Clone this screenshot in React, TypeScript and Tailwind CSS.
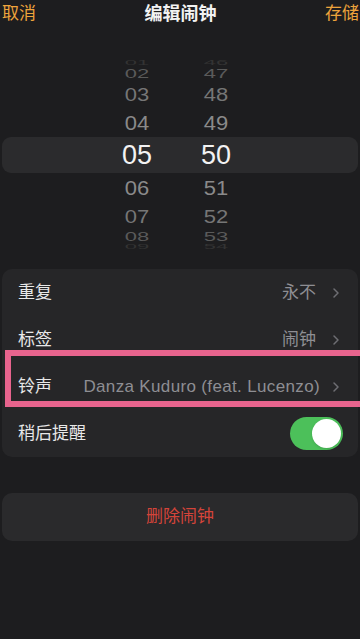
import { ChevronRight } from 'lucide-react'

type Row = { h: string; m: string; height: string; text: string; scale: string }

const above: Row[] = [
  { h: '01', m: '46', height: 'h-[8px]', text: 'text-[#333333]', scale: 'scale-y-[0.3]' },
  { h: '02', m: '47', height: 'h-[14px]', text: 'text-[#5a5a5a]', scale: 'scale-y-[0.6]' },
  { h: '03', m: '48', height: 'h-[28px]', text: 'text-[#767676]', scale: 'scale-y-[0.85]' },
  { h: '04', m: '49', height: 'h-[28px]', text: 'text-[#8a8a8a]', scale: 'scale-y-[0.95]' },
]

const below: Row[] = [
  { h: '06', m: '51', height: 'h-[30px]', text: 'text-[#8a8a8a]', scale: 'scale-y-[0.95]' },
  { h: '07', m: '52', height: 'h-[28px]', text: 'text-[#767676]', scale: 'scale-y-[0.85]' },
  { h: '08', m: '53', height: 'h-[12px]', text: 'text-[#5a5a5a]', scale: 'scale-y-[0.55]' },
  { h: '09', m: '54', height: 'h-[8px]', text: 'text-[#333333]', scale: 'scale-y-[0.3]' },
]

function PickerRow({ row }: { row: Row }) {
  return (
    <div className={`${row.height} flex items-center overflow-visible`}>
      <div className={`ml-[107px] flex gap-[19px] text-[22px] leading-none ${row.text} ${row.scale}`}>
        <span className="w-[60px] text-center">{row.h}</span>
        <span className="w-[60px] text-center">{row.m}</span>
      </div>
    </div>
  )
}

function Chevron() {
  return <ChevronRight className="h-[16px] w-[16px] text-[#6e6e73]" strokeWidth={2.25} />
}

export default function App() {
  return (
    <div
      className="w-[360px] h-[639px] overflow-hidden bg-[#1d1d1f] text-[#e8e8e8]"
      style={{ fontFamily: '"Liberation Sans", "Noto Sans CJK SC", sans-serif' }}
    >
      {/* Nav bar */}
      <div className="h-[28px] flex items-center justify-between pl-[2px] pr-[1px]">
        <span className="text-[17px] text-[#eea43c]">取消</span>
        <span className="text-[18px] font-bold text-[#f2f2f2]">编辑闹钟</span>
        <span className="text-[17px] text-[#eea43c]">存储</span>
      </div>

      {/* Time picker */}
      <div className="mt-[31px] flex flex-col">
        {above.map((r) => (
          <PickerRow key={r.h} row={r} />
        ))}
        <div className="mx-[2px] h-[36px] rounded-[9px] bg-[#2b2b2d] flex items-center">
          <div className="ml-[105px] flex gap-[19px] text-[27px] leading-none text-[#f2f2f2]">
            <span className="w-[60px] text-center">05</span>
            <span className="w-[60px] text-center">50</span>
          </div>
        </div>
        {below.map((r) => (
          <PickerRow key={r.h} row={r} />
        ))}
      </div>

      {/* Settings */}
      <div className="mt-[18px] mx-[2px] rounded-[10px] bg-[#262628] flex flex-col">
        <div className="h-[47px] flex items-center justify-between pl-[16px] pr-[14px]">
          <span className="text-[17px]">重复</span>
          <div className="flex items-center gap-[12px]">
            <span className="text-[17px] text-[#8e8e93]">永不</span>
            <Chevron />
          </div>
        </div>
        <div className="h-[47px] flex items-center justify-between pl-[16px] pr-[14px]">
          <span className="text-[17px]">标签</span>
          <div className="flex items-center gap-[12px]">
            <span className="text-[17px] text-[#8e8e93]">闹钟</span>
            <Chevron />
          </div>
        </div>
        <div className="relative h-[47px] flex items-center justify-between pl-[16px] pr-[14px]">
          <span className="text-[17px]">铃声</span>
          <div className="flex items-center gap-[8px]">
            <span className="text-[17px] tracking-[0.35px] text-[#8e8e93]">Danza Kuduro (feat. Lucenzo)</span>
            <Chevron />
          </div>
          {/* highlight annotation */}
          <div className="absolute left-[3px] -right-[12px] -top-[13px] h-[57px] border-[6px] border-[#e8648e]" />
        </div>
        <div className="h-[47px] flex items-center justify-between pl-[16px] pr-[15px]">
          <span className="text-[17px]">稍后提醒</span>
          <div className="w-[53px] h-[33px] rounded-full bg-[#4cc05a] flex items-center justify-end pr-[2px]">
            <div className="w-[29px] h-[29px] rounded-full bg-white shadow" />
          </div>
        </div>
      </div>

      {/* Delete */}
      <div className="mt-[36px] mx-[2px] h-[48px] rounded-[10px] bg-[#2a2a2c] flex items-center justify-center">
        <span className="text-[17px] text-[#d4443a]">删除闹钟</span>
      </div>
    </div>
  )
}
